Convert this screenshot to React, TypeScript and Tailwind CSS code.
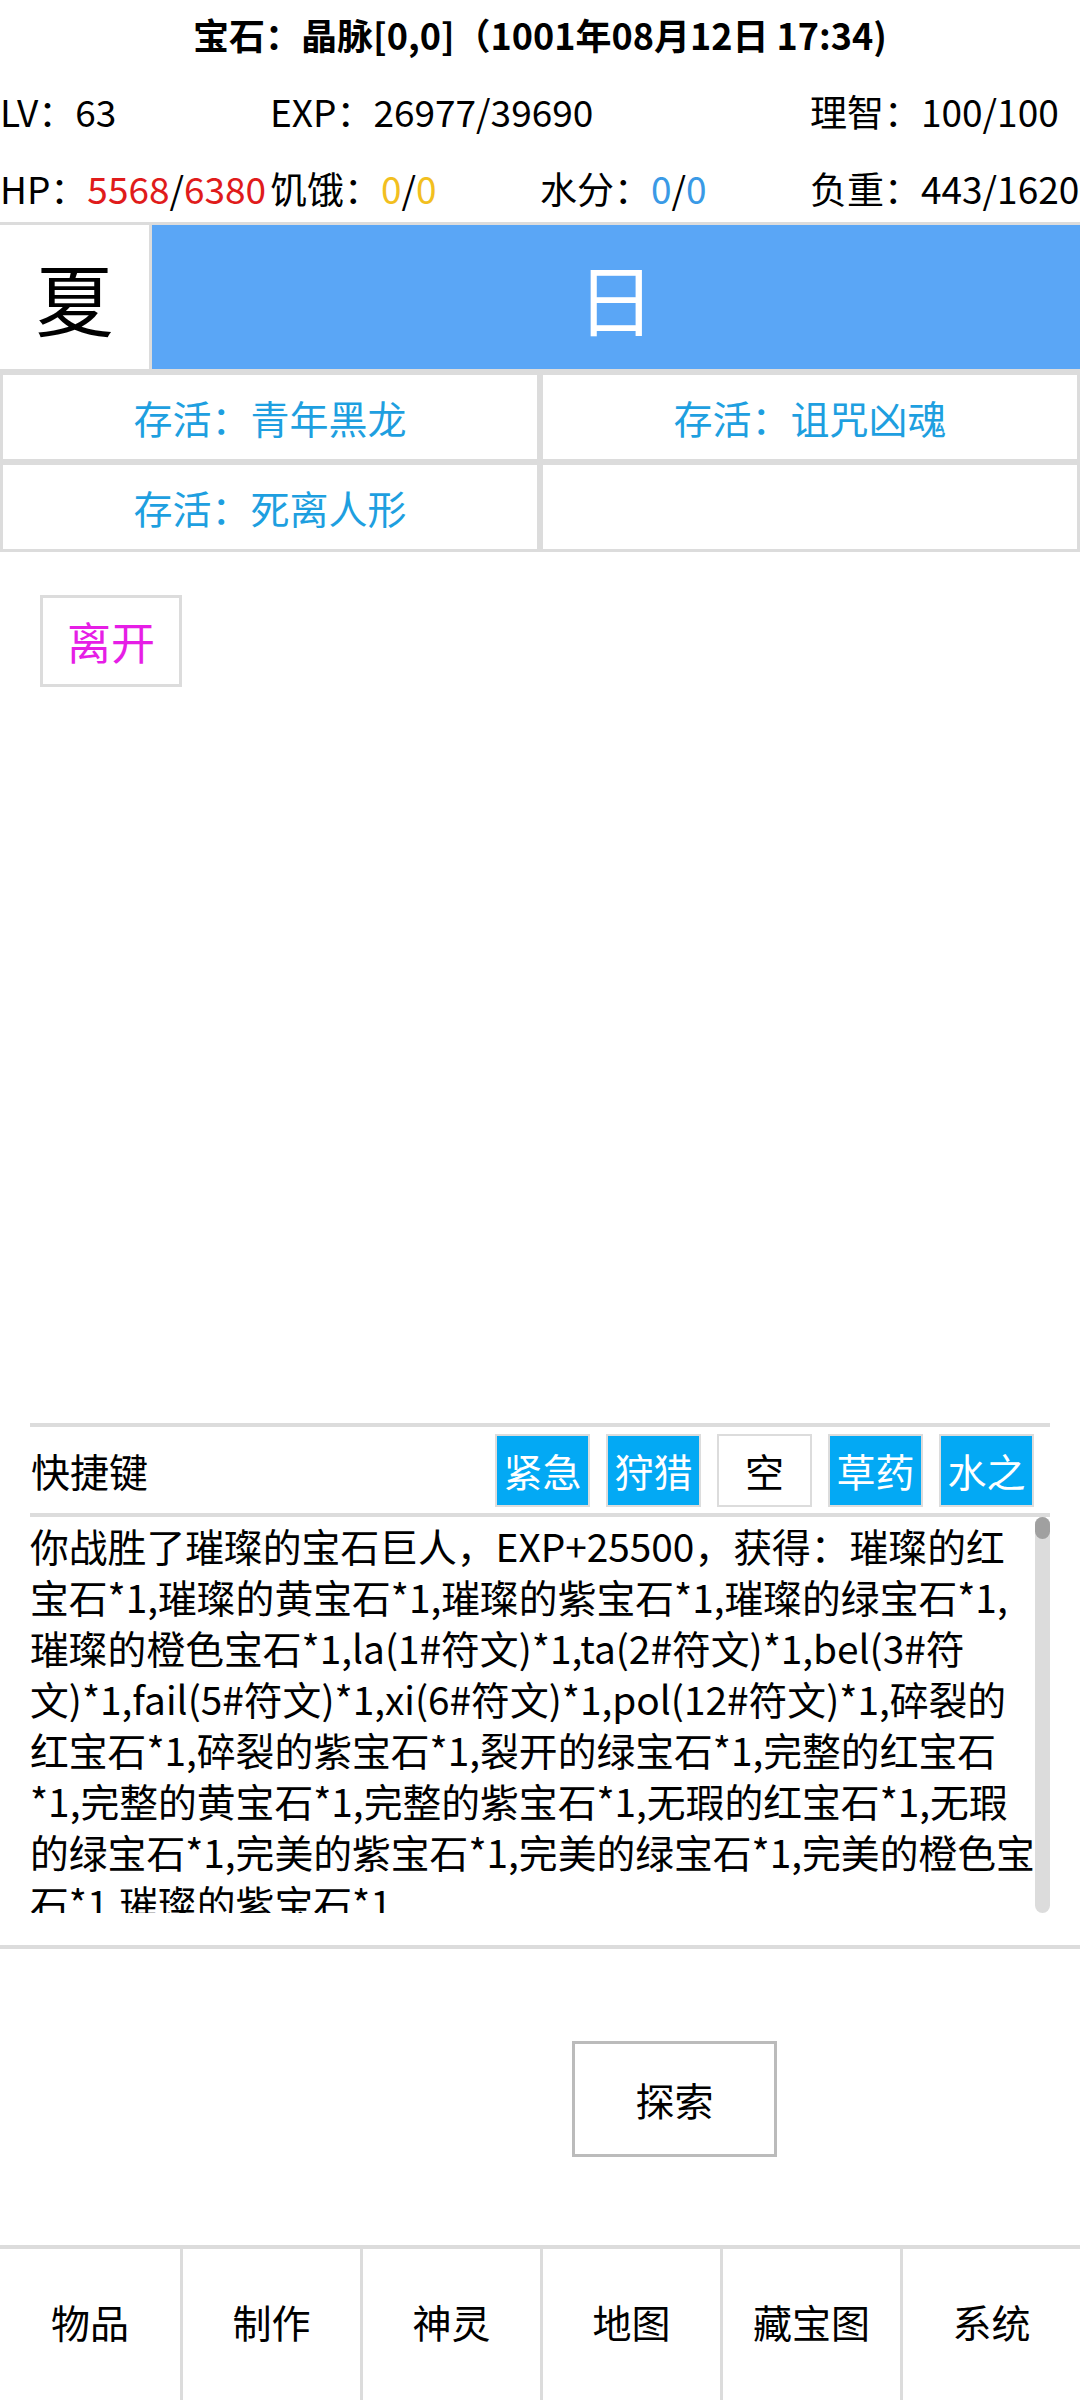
const LOG_LINES = [
  '你战胜了璀璨的宝石巨人，EXP+25500，获得：璀璨的红',
  '宝石*1,璀璨的黄宝石*1,璀璨的紫宝石*1,璀璨的绿宝石*1,',
  '璀璨的橙色宝石*1,la(1#符文)*1,ta(2#符文)*1,bel(3#符',
  '文)*1,fail(5#符文)*1,xi(6#符文)*1,pol(12#符文)*1,碎裂的',
  '红宝石*1,碎裂的紫宝石*1,裂开的绿宝石*1,完整的红宝石',
  '*1,完整的黄宝石*1,完整的紫宝石*1,无瑕的红宝石*1,无瑕',
  '的绿宝石*1,完美的紫宝石*1,完美的绿宝石*1,完美的橙色宝',
  '石*1,璀璨的紫宝石*1',
]

const QUICK_KEYS = [
  { label: '紧急', filled: true },
  { label: '狩猎', filled: true },
  { label: '空', filled: false },
  { label: '草药', filled: true },
  { label: '水之', filled: true },
]

const NAV = ['物品', '制作', '神灵', '地图', '藏宝图', '系统']

export default function App() {
  return (
    <div className="w-[1080px] h-[2400px] bg-white flex flex-col text-black text-[39px] leading-none font-[family-name:'Noto_Sans_CJK_SC',sans-serif]">
      {/* Header */}
      <div className="h-[68px] flex items-center justify-center font-bold text-[36px] whitespace-nowrap">
        宝石：晶脉[0,0]（1001年08月12日 17:34)
      </div>
      <div className="h-[86px] grid grid-cols-4 items-center text-[37px] whitespace-nowrap">
        <div>LV：63</div>
        <div className="col-span-2">EXP：26977/39690</div>
        <div>理智：100/100</div>
      </div>
      <div className="h-[68px] grid grid-cols-4 items-center text-[37px] whitespace-nowrap">
        <div>
          HP：<span className="text-[#e01b1b]">5568</span>/<span className="text-[#e01b1b]">6380</span>
        </div>
        <div>
          饥饿：<span className="text-[#f2bf1f]">0</span>/<span className="text-[#f2bf1f]">0</span>
        </div>
        <div>
          水分：<span className="text-[#3a9ae6]">0</span>/<span className="text-[#3a9ae6]">0</span>
        </div>
        <div>负重：443/1620</div>
      </div>

      {/* Season / time */}
      <div className="flex gap-[3px] bg-[#dcdcdc] pt-[3px]">
        <div className="w-[149px] h-[144px] bg-white flex items-center justify-center text-[78px]">夏</div>
        <div className="flex-1 h-[144px] bg-[#5aa6f6] text-white flex items-center justify-center text-[78px]">日</div>
      </div>

      {/* Survivors */}
      <div className="grid grid-cols-2 gap-[6px] bg-[#dcdcdc] px-[3px] pt-[6px] pb-[3px] text-[#1e9fe0]">
        <div className="h-[84px] bg-white flex items-center justify-center">存活：青年黑龙</div>
        <div className="h-[84px] bg-white flex items-center justify-center">存活：诅咒凶魂</div>
        <div className="h-[84px] bg-white flex items-center justify-center">存活：死离人形</div>
        <div className="h-[84px] bg-white" />
      </div>

      <button className="mt-[43px] ml-[40px] w-[142px] h-[92px] border-[3px] border-[#dcdcdc] text-[#e61ee6] text-[44px] flex items-center justify-center">
        离开
      </button>

      {/* Quick keys */}
      <div className="mt-[736px] mx-[30px] h-[94px] border-y-[4px] border-[#dcdcdc] flex items-center justify-between pl-[1px] pr-[16px]">
        <span>快捷键</span>
        <div className="flex gap-[16px]">
          {QUICK_KEYS.map(k => (
            <div
              key={k.label}
              className={`w-[95px] h-[73px] border-[2px] border-[#dcdcdc] flex items-center justify-center ${k.filled ? 'bg-[#03a9f4] text-white' : 'bg-white text-black'}`}
            >
              {k.label}
            </div>
          ))}
        </div>
      </div>

      {/* Log */}
      <div className="mx-[30px] h-[396px] flex overflow-hidden">
        <div className="flex-1 pt-[3px] text-[38.8px] leading-[51px] overflow-hidden">
          {LOG_LINES.map((l, i) => (
            <div key={i} className="whitespace-nowrap">{l}</div>
          ))}
        </div>
        <div className="w-[15px] bg-[#dcdcdc] rounded-full flex flex-col">
          <div className="h-[22px] bg-[#a0a0a0] rounded-full" />
        </div>
      </div>

      <div className="mt-[32px] border-t-[4px] border-[#dcdcdc]" />

      <button className="mt-[92px] ml-[572px] w-[205px] h-[116px] border-[3px] border-[#bbbbbb] flex items-center justify-center">
        探索
      </button>

      {/* Bottom nav */}
      <nav className="mt-auto h-[155px] border-t-[4px] border-[#dcdcdc] grid grid-cols-6">
        {NAV.map((n, i) => (
          <div key={n} className={`flex items-center justify-center pb-[6px] ${i > 0 ? 'border-l-[3px] border-[#dcdcdc]' : ''}`}>
            {n}
          </div>
        ))}
      </nav>
    </div>
  )
}
